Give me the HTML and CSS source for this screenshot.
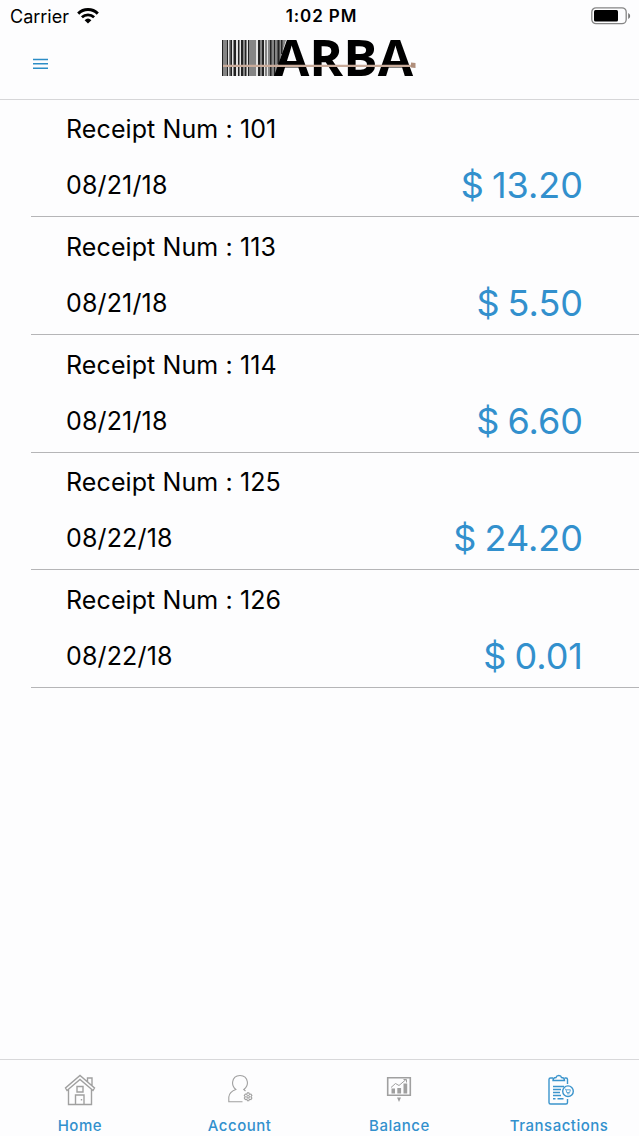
FILE: index.html
```html
<!DOCTYPE html>
<html lang="en">
<head>
    <meta charset="UTF-8">
    <meta name="viewport" content="width=device-width, initial-scale=1.0">
    <title>ARBA - Transactions</title>
    <link rel="stylesheet" href="styles.css">
</head>
<body>
    <div class="status-bar">
        <div class="carrier">
            <span>Carrier</span>
            <svg width="22" height="16" viewBox="0 0 22 16">
                <path d="M1.2 5.6a14 14 0 0 1 19.6 0" fill="none" stroke="#000" stroke-width="3"/>
                <path d="M4.9 9.2a8.9 8.9 0 0 1 12.2 0" fill="none" stroke="#000" stroke-width="2.8"/>
                <path d="M7.6 12.2a5 5 0 0 1 6.8 0L11 15.6z"/>
            </svg>
        </div>
        <div class="time">1:02 PM</div>
        <svg class="battery" width="40" height="18" viewBox="0 0 40 18">
            <rect x=".8" y=".8" width="34.4" height="15.9" rx="4.2" fill="none" stroke="#858585" stroke-width="1.3"/>
            <rect x="3" y="3" width="24" height="11.5" rx="1.5"/>
            <path d="M37.2 6v6q2-1 2-3t-2-3z" fill="#777"/>
        </svg>
    </div>

    <header>
        <button class="menu" aria-label="Menu">
            <svg width="15" height="12" viewBox="0 0 15 12">
                <path d="M0 1.5h15M0 5.8h15M0 10.2h15" stroke="#2c8dc6" stroke-width="1.4"/>
            </svg>
        </button>
        <svg class="logo" width="196" height="44" viewBox="0 0 196 44">
            <path d="M1 4h64L52 40H1z" fill="#e4e4e4"/>
            <path d="M3 4h2v36H3zM8 4h3v36H8zM21 4h2v36h-2zM29 4h6v36h-6zM40 4h2v36h-2zM47 4h5v36h-5zM53 4h12L54 40h-1z" fill="#858585"/>
            <path d="M1 4h1.500v36H1zM5.500 4H7v36H5.500zM9.500 4H11v36H9.500zM12.500 4H15v36h-2.500zM17 4h1.500v36H17zM20 4h2v36h-2zM23.500 4h2v36h-2zM27 4h1.500v36H27zM37 4h2.500v36H37zM41 4h2v36h-2zM44.500 4h1v36h-1zM49 4h1.500v36H49zM52.500 4h1.500v36h-1.500zM56.500 4h2v24h-2zM60 4h1.500v14H60z" fill="#222"/>
            <text class="logo-text" x="53" y="40" textLength="139" lengthAdjust="spacingAndGlyphs">ARBA</text>
            <path d="M2 29.800h191" stroke="#c9ab9a" stroke-width="2.200"/>
            <path d="M190 26.500l4.500 .500v5l-4.500-.500z" fill="#b08f7c"/>
        </svg>
    </header>

    <main>
        <div class="receipt">
            <div class="number">Receipt Num : 101</div>
            <div class="details"><span class="date">08/21/18</span><span class="amount">$ 13.20</span></div>
        </div>
        <div class="receipt">
            <div class="number">Receipt Num : 113</div>
            <div class="details"><span class="date">08/21/18</span><span class="amount">$ 5.50</span></div>
        </div>
        <div class="receipt">
            <div class="number">Receipt Num : 114</div>
            <div class="details"><span class="date">08/21/18</span><span class="amount">$ 6.60</span></div>
        </div>
        <div class="receipt">
            <div class="number">Receipt Num : 125</div>
            <div class="details"><span class="date">08/22/18</span><span class="amount">$ 24.20</span></div>
        </div>
        <div class="receipt">
            <div class="number">Receipt Num : 126</div>
            <div class="details"><span class="date">08/22/18</span><span class="amount">$ 0.01</span></div>
        </div>
    </main>

    <nav>
        <a class="tab">
            <svg width="32" height="32" viewBox="0 0 32 32">
                <path d="M4.500 15v15.500h23V15M3 16.500L1.500 14 16 1.500 30.500 14 29 16.500 16 5.500zM23.500 7.500V4H28v7.500M13 12.500h6V18h-6zM11.500 30.500V21h8.500v9.500M17.500 25v1.500"/>
            </svg>
            <span>Home</span>
        </a>
        <a class="tab">
            <svg class="thin" width="32" height="32" viewBox="0 0 32 32">
                <path d="M18.500 27.800H4.800V23q.500-5 7-7.500-3.700-3-3.200-7.500 1-6.500 7.400-6.500T23.400 8q.500 4.500-3.600 7.500l1.700 1.500"/>
                <path d="M23.400 18.800h1.400l.600 1.500 1.500-.300 1 1.500-1 1.300 1 1.300-1 1.500-1.500-.300-.600 1.500h-1.400l-.600-1.500-1.500.300-1-1.500 1-1.300-1-1.300 1-1.500 1.500.300z"/>
                <circle cx="24.100" cy="22.800" r="1.300"/>
            </svg>
            <span>Account</span>
        </a>
        <a class="tab">
            <svg width="32" height="32" viewBox="0 0 32 32">
                <path d="M4.700 3.800h22.600v17.400H4.700z" stroke-width="1.600"/>
                <path d="M8 13.500l4.500-4 3.500 2 7-6M20.500 5.500h3v3" stroke-width="1"/>
                <path class="solid" d="M8.500 14.500h3.500V19.500H8.500zM14.300 14h3.800v5.500h-3.800zM20.500 9.500h3.700v10h-3.700zM14 23.500h4L16 28z"/>
            </svg>
            <span>Balance</span>
        </a>
        <a class="tab active">
            <svg width="32" height="32" viewBox="0 0 32 32">
                <path d="M10 4H7.500Q6 4 6 5.500v23Q6 30 7.500 30H23q1.500 0 1.500-1.500V25M21.500 4H23q1.500 0 1.500 1.500V10"/>
                <path d="M10 6.500q0-3 3-3 .500-2 2.800-2t2.700 2q3 0 3 3z"/>
                <path d="M10 12.500h11M10 15.500h8M10 18.500h7M10 21.500h8M10 24.700h2.500M14.500 24.700h6"/>
                <circle cx="25" cy="17.200" r="5.300"/>
                <path d="M22 15l1 .500.700 3h3l.700-2.700H23.200M24 19.800h2.500" stroke-width=".8"/>
            </svg>
            <span>Transactions</span>
        </a>
    </nav>
</body>
</html>
```

FILE: styles.css
```css
* {
    box-sizing: border-box;
}
body {
    font-family: Inter, "Liberation Sans", sans-serif;
    margin: 0;
    height: 1136px;
    display: flex;
    flex-direction: column;
    background-color: #fdfdfe;
    color: #000;
    overflow: hidden;
}
.status-bar {
    display: grid;
    grid-template-columns: 1fr auto 1fr;
    align-items: center;
    height: 32px;
    padding: 0 8px 0 10px;
    font-size: 18px;
}
.carrier {
    display: flex;
    align-items: center;
    gap: 8px;
}
.time {
    font-weight: 600;
    font-size: 17px;
    line-height: 18px;
    letter-spacing: 0.9px;
    padding-left: 2px;
}
.battery {
    justify-self: end;
}
header {
    display: grid;
    grid-template-columns: 1fr auto 1fr;
    height: 68px;
    padding: 4px 0 0 33px;
    border-bottom: 1px solid #d6d6d8;
}
.menu {
    background: none;
    border: none;
    padding: 22px 0 0;
    height: 34px;
    justify-self: start;
    line-height: 0;
}
.logo {
    margin-right: 35px;
    overflow: visible;
}
.logo-text {
    font: bold 50px "Open Sans", sans-serif;
    fill: #000;
}
main {
    flex: 1;
    padding-left: 31px;
}
.receipt {
    height: 117.75px;
    padding: 11.75px 56px 0 35px;
    border-bottom: 1px solid #b5b5b7;
    font-size: 25px;
}
.receipt:first-child {
    height: 117px;
    padding-top: 11px;
}
.number {
    line-height: 36px;
    letter-spacing: 0.1px;
}
.details {
    display: flex;
    justify-content: space-between;
    align-items: center;
    height: 46px;
    margin-top: 15px;
}
.date {
    letter-spacing: 0.15px;
}
.amount {
    color: #3290cd;
    font-size: 36px;
    word-spacing: -2px;
}
nav {
    display: grid;
    grid-template-columns: repeat(4, 1fr);
    height: 77px;
    border-top: 1px solid #d8d8da;
}
.tab {
    display: flex;
    flex-direction: column;
    align-items: center;
    padding-top: 14px;
    color: #3290cd;
    font-size: 15px;
    font-weight: 500;
    letter-spacing: 0.5px;
}
.tab span {
    margin-top: 10px;
    line-height: 20px;
}
.tab svg {
    fill: none;
    stroke: #a0a0a0;
    stroke-width: 1.4;
}
.tab .thin {
    stroke-width: 1.1;
}
.tab .solid {
    fill: #a0a0a0;
    stroke: none;
}
.active svg {
    stroke: #3b94cc;
}
```
